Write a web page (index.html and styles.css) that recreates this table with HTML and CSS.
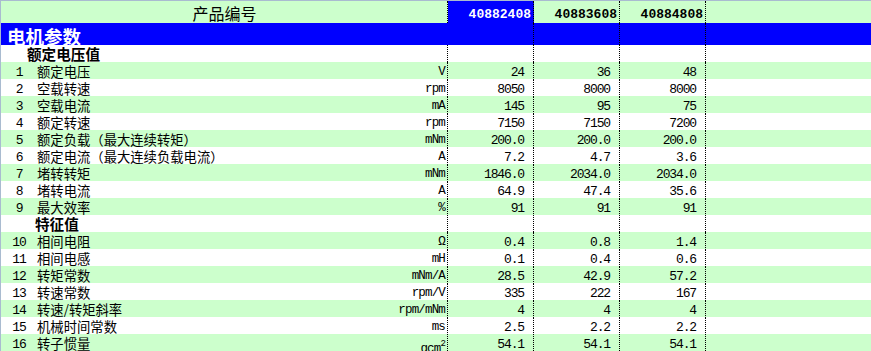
FILE: index.html
```html
<!DOCTYPE html>
<html lang="zh">
<head>
<meta charset="utf-8">
<title>电机参数</title>
<link rel="stylesheet" href="styles.css">
</head>
<body>
<div class="sheet">
  <div class="row head g">
    <div class="cell a center"><span class="title">产品编号</span></div>
    <div class="cell v code sel">40882408</div>
    <div class="cell v code">40883608</div>
    <div class="cell v code">40884808</div>
    <div class="cell rest"></div>
  </div>
  <div class="row band">
    <div class="cell a nob"><span class="band-title">电机参数</span></div>
    <div class="cell v"></div>
    <div class="cell v"></div>
    <div class="cell v"></div>
    <div class="cell rest"></div>
  </div>
  <div class="row w">
    <div class="cell a"><span class="sect s1">额定电压值</span></div>
    <div class="cell v"></div><div class="cell v"></div><div class="cell v"></div><div class="cell rest"></div>
  </div>
  <div class="row g">
    <div class="cell a"><span class="num">1</span><span class="label">额定电压</span><span class="unit">V</span></div>
    <div class="cell v">24</div><div class="cell v">36</div><div class="cell v">48</div><div class="cell rest"></div>
  </div>
  <div class="row w">
    <div class="cell a"><span class="num">2</span><span class="label">空载转速</span><span class="unit">rpm</span></div>
    <div class="cell v">8050</div><div class="cell v">8000</div><div class="cell v">8000</div><div class="cell rest"></div>
  </div>
  <div class="row g">
    <div class="cell a"><span class="num">3</span><span class="label">空载电流</span><span class="unit">mA</span></div>
    <div class="cell v">145</div><div class="cell v">95</div><div class="cell v">75</div><div class="cell rest"></div>
  </div>
  <div class="row w">
    <div class="cell a"><span class="num">4</span><span class="label">额定转速</span><span class="unit">rpm</span></div>
    <div class="cell v">7150</div><div class="cell v">7150</div><div class="cell v">7200</div><div class="cell rest"></div>
  </div>
  <div class="row g">
    <div class="cell a"><span class="num">5</span><span class="label">额定负载（最大连续转矩）</span><span class="unit">mNm</span></div>
    <div class="cell v">200.0</div><div class="cell v">200.0</div><div class="cell v">200.0</div><div class="cell rest"></div>
  </div>
  <div class="row w">
    <div class="cell a"><span class="num">6</span><span class="label">额定电流（最大连续负载电流）</span><span class="unit">A</span></div>
    <div class="cell v">7.2</div><div class="cell v">4.7</div><div class="cell v">3.6</div><div class="cell rest"></div>
  </div>
  <div class="row g">
    <div class="cell a"><span class="num">7</span><span class="label">堵转转矩</span><span class="unit">mNm</span></div>
    <div class="cell v">1846.0</div><div class="cell v">2034.0</div><div class="cell v">2034.0</div><div class="cell rest"></div>
  </div>
  <div class="row w">
    <div class="cell a"><span class="num">8</span><span class="label">堵转电流</span><span class="unit">A</span></div>
    <div class="cell v">64.9</div><div class="cell v">47.4</div><div class="cell v">35.6</div><div class="cell rest"></div>
  </div>
  <div class="row g">
    <div class="cell a"><span class="num">9</span><span class="label">最大效率</span><span class="unit">%</span></div>
    <div class="cell v">91</div><div class="cell v">91</div><div class="cell v">91</div><div class="cell rest"></div>
  </div>
  <div class="row w">
    <div class="cell a"><span class="sect s2">特征值</span></div>
    <div class="cell v"></div><div class="cell v"></div><div class="cell v"></div><div class="cell rest"></div>
  </div>
  <div class="row g">
    <div class="cell a"><span class="num">10</span><span class="label">相间电阻</span><span class="unit">Ω</span></div>
    <div class="cell v">0.4</div><div class="cell v">0.8</div><div class="cell v">1.4</div><div class="cell rest"></div>
  </div>
  <div class="row w">
    <div class="cell a"><span class="num">11</span><span class="label">相间电感</span><span class="unit">mH</span></div>
    <div class="cell v">0.1</div><div class="cell v">0.4</div><div class="cell v">0.6</div><div class="cell rest"></div>
  </div>
  <div class="row g">
    <div class="cell a"><span class="num">12</span><span class="label">转矩常数</span><span class="unit">mNm/A</span></div>
    <div class="cell v">28.5</div><div class="cell v">42.9</div><div class="cell v">57.2</div><div class="cell rest"></div>
  </div>
  <div class="row w">
    <div class="cell a"><span class="num">13</span><span class="label">转速常数</span><span class="unit">rpm/V</span></div>
    <div class="cell v">335</div><div class="cell v">222</div><div class="cell v">167</div><div class="cell rest"></div>
  </div>
  <div class="row g">
    <div class="cell a"><span class="num">14</span><span class="label">转速/转矩斜率</span><span class="unit">rpm/mNm</span></div>
    <div class="cell v">4</div><div class="cell v">4</div><div class="cell v">4</div><div class="cell rest"></div>
  </div>
  <div class="row w">
    <div class="cell a"><span class="num">15</span><span class="label">机械时间常数</span><span class="unit">ms</span></div>
    <div class="cell v">2.5</div><div class="cell v">2.2</div><div class="cell v">2.2</div><div class="cell rest"></div>
  </div>
  <div class="row g">
    <div class="cell a"><span class="num">16</span><span class="label">转子惯量</span><span class="unit low">gcm<sup>2</sup></span></div>
    <div class="cell v">54.1</div><div class="cell v">54.1</div><div class="cell v">54.1</div><div class="cell rest"></div>
  </div>
</div>
</body>
</html>
```

FILE: styles.css
```css
html, body {
  margin: 0;
  padding: 0;
  background: #ffffff;
  overflow: hidden;
}

.sheet {
  width: 871px;
  border-top: 1px solid #a9bbd0;
  border-left: 1px solid #a9bbd0;
  box-sizing: border-box;
  font-family: "Noto Sans CJK SC", sans-serif;
  color: #000;
}

.row {
  display: grid;
  grid-template-columns: 447px 86px 86px 86px 1fr;
  height: 17px;
}

.row.g { background: #ccffcc; }
.row.w { background: #ffffff; }
.row.head { height: 22px; }
.row.band { height: 22px; background: #0000ff; }

.cell {
  box-sizing: border-box;
  height: 100%;
  overflow: visible;
  white-space: nowrap;
}

.cell.a,
.cell.v {
  border-right: 1px dotted #000;
}

.cell.a.nob { border-right: none; }

.cell.a {
  display: flex;
  align-items: flex-start;
}

.cell.a.center { justify-content: center; }

.title {
  font-size: 16px;
  line-height: 16px;
  padding-top: 4px;
  padding-left: 1px;
}

.band-title {
  color: #ffffff;
  font-weight: bold;
  font-size: 18.5px;
  line-height: 18px;
  padding-top: 4px;
  padding-left: 6px;
}

.sect {
  font-weight: bold;
  font-size: 14.6px;
  line-height: 15px;
  padding-top: 1px;
}
.sect.s1 { padding-left: 26px; }
.sect.s2 { padding-left: 34px; }

.num {
  width: 36px;
  flex: none;
  text-align: center;
  font-family: "Liberation Mono", monospace;
  font-size: 13px;
  letter-spacing: -1.1px;
  line-height: 15px;
  padding-top: 3px;
}

.label {
  font-size: 13.33px;
  line-height: 15px;
  padding-top: 2px;
}

.unit {
  margin-left: auto;
  padding-right: 2px;
  font-family: "Liberation Mono", monospace;
  font-size: 12.5px;
  letter-spacing: -0.83px;
  line-height: 15px;
  padding-top: 3px;
}

.unit.low { padding-top: 8px; }
.unit sup {
  font-size: 9px;
  line-height: 0;
  vertical-align: 6px;
}

.cell.v {
  text-align: right;
  padding-right: 9px;
  font-family: "Liberation Mono", monospace;
  font-size: 13px;
  letter-spacing: -1.13px;
  line-height: 15px;
  padding-top: 3px;
}

.cell.v.code {
  font-weight: bold;
  font-size: 13px;
  letter-spacing: 0;
  padding-right: 2px;
  padding-top: 6px;
}

.cell.v.sel {
  background: #0000ff;
  color: #ffffff;
}
```
